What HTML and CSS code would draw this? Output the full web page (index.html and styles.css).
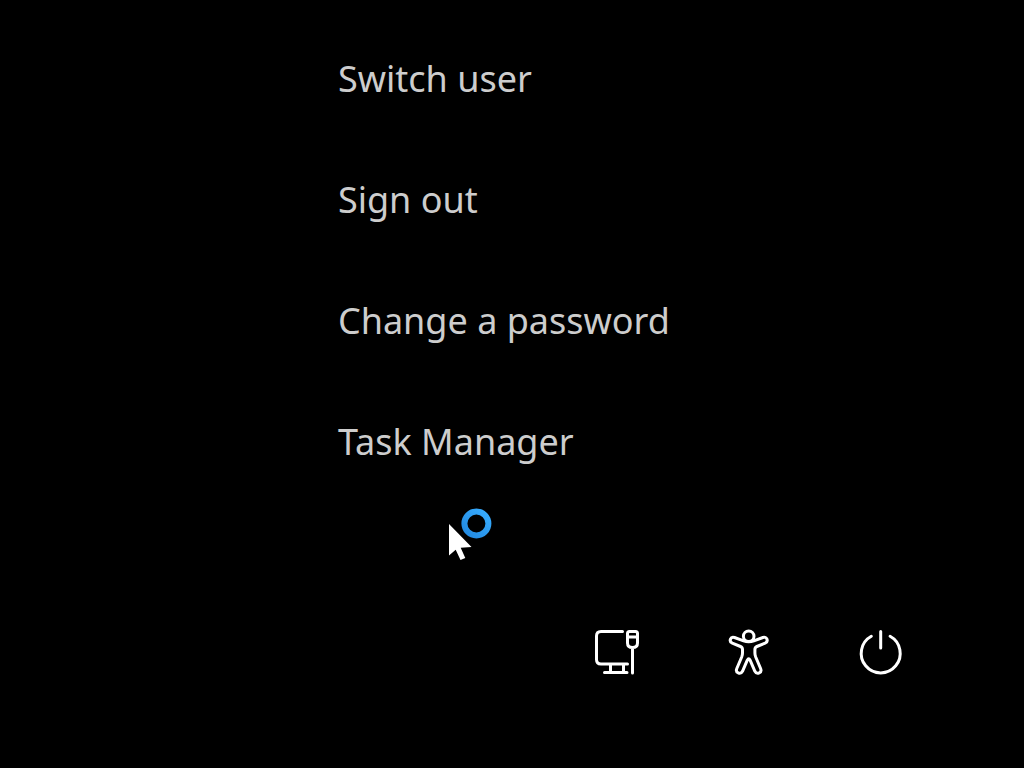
FILE: index.html
```
<!DOCTYPE html>
<html lang="en">
<head>
<meta charset="utf-8">
<title>Security options</title>
<link rel="stylesheet" href="styles.css">
</head>
<body>
<main class="screen">
  <nav class="menu" aria-label="Security options">
    <button class="option" type="button">Switch user</button>
    <button class="option" type="button">Sign out</button>
    <button class="option" type="button">Change a password</button>
    <button class="option" type="button">Task Manager</button>
  </nav>
  <footer class="tray">
    <button class="tray-button" type="button" aria-label="Network">
      <svg class="icon" viewBox="-1 0 64 64"><path d="M37.500 11.500H16Q11.500 11.500 11.500 16V39.500Q11.500 44 16 44H42.500M25.500 44V52M38.500 44V52M19.500 52.500H42M47.500 28V53M44.500 11.500H50.500Q52.500 11.500 52.500 13.500V23Q52.500 27.500 47.500 27.500Q42.500 27.500 42.500 23V13.500Q42.500 11.500 44.500 11.500ZM42.500 17H52.500"/></svg>
    </button>
    <button class="tray-button" type="button" aria-label="Accessibility">
      <svg class="icon" viewBox="0 0 64 64"><circle cx="32.700" cy="16.300" r="5.300"/><path d="M27.600 20.800L18.500 17.500C14.500 16 12.500 21.500 16.300 23.200L24.500 26.500Q26.500 27.300 26.500 29.500V33Q26.500 35 25.700 37L20.800 48.500C19 53 24.500 55 26.500 51.300L31.300 40.200Q32.700 37.500 34.100 40.200L38.900 51.300C40.900 55 46.400 53 44.600 48.500L39.700 37Q38.900 35 38.900 33V29.500Q38.900 27.300 40.900 26.500L49.100 23.200C52.900 21.500 50.900 16 46.900 17.500L37.800 20.800Q32.700 22.800 27.600 20.800"/></svg>
    </button>
    <button class="tray-button" type="button" aria-label="Power">
      <svg class="icon" viewBox="0 0 64 64"><path d="M23.300 16.300A19.500 19.500 0 1 0 42.100 16.300M32.700 11.500V28"/></svg>
    </button>
  </footer>
  <svg class="pointer" viewBox="0 0 64 64" aria-hidden="true"><defs><linearGradient id="ring-blue" x1="0" y1="1" x2="1" y2="0"><stop offset="0" stop-color="#2188e0"/><stop offset="1" stop-color="#38adff"/></linearGradient></defs><circle class="ring" cx="36.400" cy="23.500" r="12"/><path class="arrow" d="M9 24V55.500L15.700 49.700L20.500 60L25.300 58L20.700 47.700L31.500 47Z"/></svg>
</main>
</body>
</html>
```
FILE: styles.css
```
* { box-sizing: border-box; }
body { margin: 0; background: #000; color: #cdcdcd; font-family: "Segoe UI", "Noto Sans", "Open Sans", sans-serif; }
.screen { position: relative; min-height: 100vh; display: flex; flex-direction: column; justify-content: space-between; padding: 52px 112px 84px 33%; }
.menu { display: flex; flex-direction: column; align-items: flex-start; gap: 67px; }
.option { padding: 0; border: 0; background: none; color: inherit; font: inherit; font-size: 36px; line-height: 54px; white-space: nowrap; }
.tray { display: flex; justify-content: flex-end; gap: 68px; }
.tray-button { width: 64px; height: 64px; padding: 0; border: 0; background: none; color: #fff; }
.icon { display: block; width: 64px; height: 64px; fill: none; stroke: currentColor; stroke-width: 3; stroke-linecap: round; stroke-linejoin: round; }
.pointer { position: absolute; left: 440px; top: 500px; width: 64px; height: 64px; pointer-events: none; }
.ring { fill: none; stroke: url(#ring-blue); stroke-width: 6; }
.arrow { fill: #fff; }
```
